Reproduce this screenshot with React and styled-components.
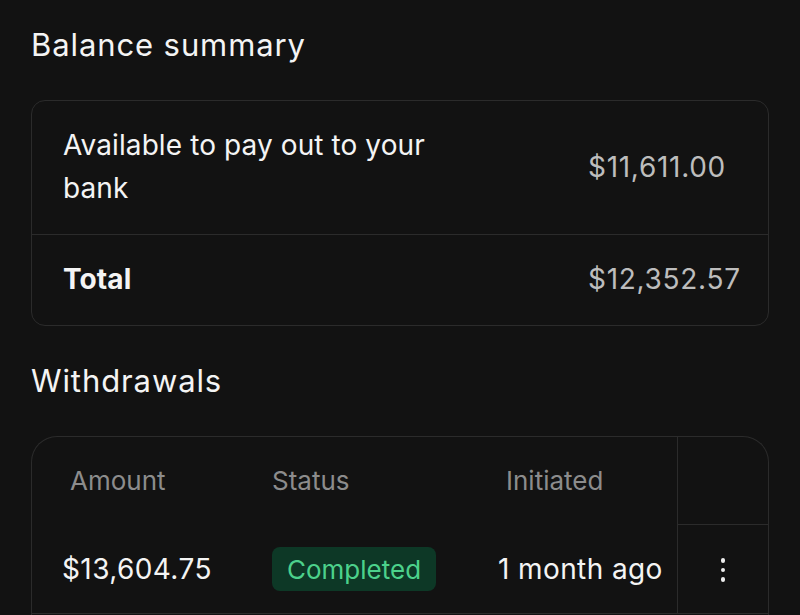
import styled, { createGlobalStyle } from "styled-components";

const GlobalStyle = createGlobalStyle`
  html, body {
    margin: 0;
    padding: 0;
    background: #121212;
  }
  body {
    font-family: "Inter", "Liberation Sans", sans-serif;
    color: #f2f2f2;
    -webkit-font-smoothing: antialiased;
  }
`;

const withdrawals = [
  { amount: "$13,604.75", status: "Completed", initiated: "1 month ago" },
];

const App = () => {
  return (
    <>
      <GlobalStyle />
      <Page>
        <Heading>Balance summary</Heading>
        <Card>
          <SummaryRow>
            <Label>Available to pay out to your bank</Label>
            <Value>$11,611.00</Value>
          </SummaryRow>
          <SummaryRow>
            <Label $bold>Total</Label>
            <Value>$12,352.57</Value>
          </SummaryRow>
        </Card>

        <Heading>Withdrawals</Heading>
        <TableCard>
          <HeadCell $indent={8}>Amount</HeadCell>
          <HeadCell>Status</HeadCell>
          <HeadCell $indent={8}>Initiated</HeadCell>
          <ActionCell $head />
          {withdrawals.map((w) => (
            <Row key={w.amount}>
              <Cell>{w.amount}</Cell>
              <Cell>
                <Badge>{w.status}</Badge>
              </Cell>
              <Cell>{w.initiated}</Cell>
              <ActionCell>
                <Kebab aria-label="More">
                  <span />
                  <span />
                  <span />
                </Kebab>
              </ActionCell>
            </Row>
          ))}
        </TableCard>
      </Page>
    </>
  );
};

export default App;

const Page = styled.div`
  padding: 27px 31px 0;
  width: 800px;
  box-sizing: border-box;
  height: 615px;
  overflow: hidden;
`;

const Heading = styled.h2`
  margin: 0 0 37px;
  font-size: 31px;
  line-height: 36px;
  font-weight: 400;
  color: #f4f4f4;
  letter-spacing: 0.9px;

  & + div + & {
    margin-top: 37px;
  }
`;

const Card = styled.div`
  border: 1px solid #2b2b2b;
  border-radius: 14px;
  overflow: hidden;
`;

const SummaryRow = styled.div`
  display: grid;
  grid-template-columns: 1fr 149px;
  align-items: center;
  padding: 23px 31px 24px;

  & + & {
    border-top: 1px solid #2b2b2b;
  }
`;

const Label = styled.div`
  max-width: 400px;
  font-size: 28px;
  line-height: 43px;
  letter-spacing: 0.1px;
  font-weight: ${(p) => (p.$bold ? 700 : 400)};
  color: #f4f4f4;
`;

const Value = styled.div`
  font-size: 28px;
  line-height: 43px;
  letter-spacing: 0.7px;
  color: #bdbdbd;
  white-space: nowrap;
`;

const TableCard = styled.div`
  display: grid;
  grid-template-columns: 210px 226px 209px 1fr;
  border: 1px solid #2b2b2b;
  border-bottom: none;
  border-radius: 26px 26px 0 0;
  height: 200px;
  align-content: start;
`;

const HeadCell = styled.div`
  height: 87px;
  display: flex;
  align-items: center;
  padding-left: ${(p) => 30 + (p.$indent || 0)}px;
  font-size: 26px;
  color: #8c8c8c;
`;

const Row = styled.div`
  display: contents;
`;

const Cell = styled.div`
  height: 88px;
  display: flex;
  align-items: center;
  padding-left: 30px;
  font-size: 28px;
  letter-spacing: 0.4px;
  color: #f4f4f4;
  white-space: nowrap;
  border-bottom: 1px solid #2b2b2b;
`;

const ActionCell = styled.div`
  height: ${(p) => (p.$head ? 87 : 88)}px;
  border-left: 1px solid #2b2b2b;
  border-bottom: 1px solid #2b2b2b;
  display: flex;
  align-items: center;
  justify-content: center;
`;

const Badge = styled.span`
  display: inline-flex;
  align-items: center;
  height: 44px;
  padding: 0 15px;
  border-radius: 8px;
  background: #0d3826;
  color: #4cd18b;
  font-size: 26px;
  letter-spacing: 0;
`;

const Kebab = styled.div`
  display: flex;
  flex-direction: column;
  gap: 5px;
  margin-top: 2px;

  span {
    width: 4.5px;
    height: 4.5px;
    border-radius: 50%;
    background: #ededed;
  }
`;
